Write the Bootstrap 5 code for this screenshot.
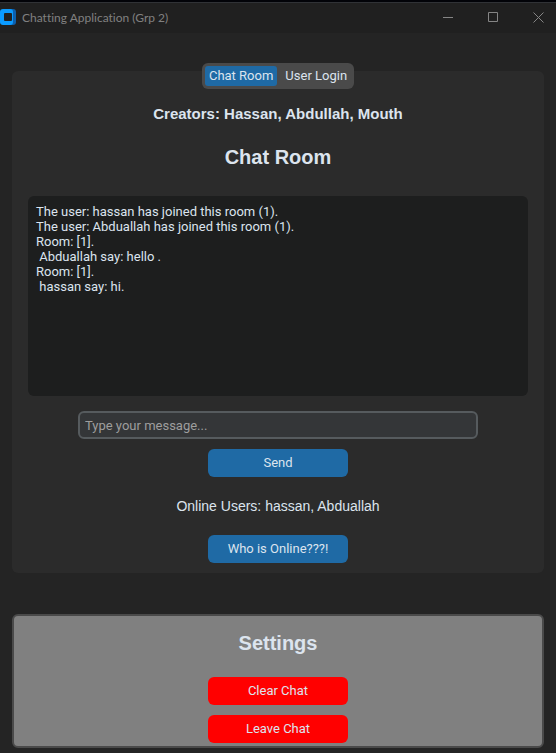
<!DOCTYPE html>
<html lang="en" data-bs-theme="dark">
<head>
<meta charset="utf-8">
<meta name="viewport" content="width=device-width, initial-scale=1">
<title>Chatting Application (Grp 2)</title>
<link href="https://cdn.jsdelivr.net/npm/bootstrap@5.3.0/dist/css/bootstrap.min.css" rel="stylesheet">
<style>
  body { background: #242424; color: #dce4ee; font: 13px/15px Roboto, sans-serif; }
  .titlebar { height: 33px; background: #202020; border-top: 2px solid #020308; box-shadow: inset 0 1px #303236; font: 12px/16px Lato, sans-serif; font-variant-ligatures: none; color: #808080; }
  .window-title { margin-left: 6px; }
  .window-controls { gap: 10px; }
  .window-btn { width: 35px; height: 30px; padding: 0; border: 0; background: none; color: #858585; display: flex; align-items: center; justify-content: center; }
  .app-body { padding: 38px 12px 5px; }
  .chat-panel { background: #2b2b2b; border-radius: 6px; padding: 0 16px 10px; }
  .tab-switch { margin-top: -8px; padding: 3px; background: #4a4a4a; border-radius: 6px; }
  .tab-switch .nav-link { height: 20px; padding: 0 4px; line-height: 20px; font-size: 13px; color: #dce4ee; border-radius: 3px; }
  .tab-switch .nav-link.active { background: #1f6aa5; color: #dce4ee; }
  .creators { margin-top: 16px; font: bold 15px/18px "Liberation Sans", sans-serif; }
  .heading { font: bold 20px/24px "Liberation Sans", sans-serif; color: #dce4ee; }
  .room-heading { margin-top: 22px; }
  .chat-log { width: 100%; height: 200px; margin-top: 27px; padding: 8px; background: #1d1e1e; border-radius: 6px; white-space: pre-wrap; overflow: auto; }
  .message-form { gap: 10px; margin-top: 15px; }
  .message-input { width: 80%; height: 28px; padding: 0 5px; background: #343638; border: 2px solid #565b5e; border-radius: 6px; font-size: 13px; line-height: 24px; }
  .message-input::placeholder { color: #9e9e9e; opacity: 1; }
  .app-btn { width: 140px; height: 28px; padding: 0; border: 0; border-radius: 6px; font-size: 13px; line-height: 28px; color: #dce4ee; }
  .app-btn:hover { color: #fff; }
  .btn-blue, .btn-blue:hover { background: #1f6aa5; }
  .btn-red, .btn-red:hover { background: #f00; }
  .online-users { margin: 20px 0; font: 14px/18px "Liberation Sans", sans-serif; }
  .settings-panel { margin-top: 41px; padding: 15px 16px 3px; background: #808080; border: 2px solid #4a4a4a; border-radius: 6px; }
  .settings-actions { gap: 10px; margin-top: 22px; }
</style>
</head>
<body>
<header class="titlebar d-flex align-items-center">
  <svg width="16" height="18" viewBox="0 0 16 18" aria-hidden="true">
    <path fill="#0b5fae" d="M8 0h5q3 0 3 3v10q0 3-3 3H8z"/>
    <path fill="#0b9bff" d="M3 0h7q3 0 3 3v10q0 3-3 3H3q-3 0-3-3V3q0-3 3-3z"/>
    <rect x="4" y="4" width="8" height="8" rx="1" fill="#202020"/>
  </svg>
  <span class="window-title">Chatting Application (Grp 2)</span>
  <div class="window-controls d-flex ms-auto">
    <button type="button" class="window-btn" aria-label="Minimize"><svg width="11" height="11" viewBox="0 0 11 11"><path d="M0 5.500h10" stroke="currentColor"/></svg></button>
    <button type="button" class="window-btn" aria-label="Maximize"><svg width="11" height="11" viewBox="0 0 11 11"><path d="M.5.5h9v9h-9z" fill="none" stroke="currentColor"/></svg></button>
    <button type="button" class="window-btn" aria-label="Close"><svg width="11" height="11" viewBox="0 0 11 11"><path d="M.5.5l10 10m0-10l-10 10" stroke="currentColor"/></svg></button>
  </div>
</header>
<main class="app-body">
  <section class="chat-panel d-flex flex-column align-items-center">
    <div class="tab-switch nav nav-pills gap-1" role="tablist">
      <button type="button" class="nav-link active" role="tab" aria-selected="true">Chat Room</button>
      <button type="button" class="nav-link" role="tab" aria-selected="false">User Login</button>
    </div>
    <p class="creators mb-0 text-center">Creators: Hassan, Abdullah, Mouth</p>
    <h1 class="heading room-heading mb-0 text-center">Chat Room</h1>
    <div class="chat-log" role="log">The user: hassan has joined this room (1).
The user: Abduallah has joined this room (1).
Room: [1].
 Abduallah say: hello .
Room: [1].
 hassan say: hi.</div>
    <form class="message-form d-flex flex-column align-items-center w-100">
      <input type="text" class="form-control message-input" placeholder="Type your message..." aria-label="Type your message">
      <button type="button" class="btn app-btn btn-blue">Send</button>
    </form>
    <p class="online-users text-center">Online Users: hassan, Abduallah</p>
    <button type="button" class="btn app-btn btn-blue">Who is Online???!</button>
  </section>
  <section class="settings-panel d-flex flex-column align-items-center">
    <h2 class="heading mb-0">Settings</h2>
    <div class="settings-actions d-flex flex-column">
      <button type="button" class="btn app-btn btn-red">Clear Chat</button>
      <button type="button" class="btn app-btn btn-red">Leave Chat</button>
    </div>
  </section>
</main>
<script src="https://cdn.jsdelivr.net/npm/bootstrap@5.3.0/dist/js/bootstrap.bundle.min.js"></script>
</body>
</html>
